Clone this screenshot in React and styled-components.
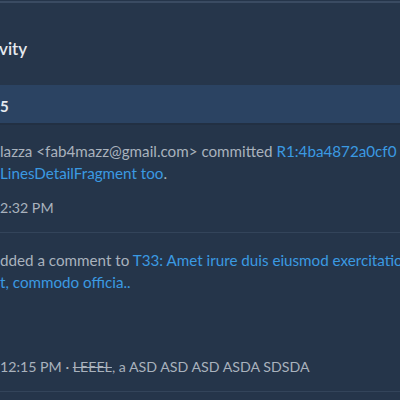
import React from 'react'
import styled, { createGlobalStyle } from 'styled-components'

const Global = createGlobalStyle`
  html, body {
    margin: 0;
    padding: 0;
    background: #25354a;
  }
  body {
    font-family: Lato, "Noto Sans", sans-serif;
    overflow: hidden;
  }
`

const Page = styled.div`
  width: 400px;
  height: 400px;
  overflow: hidden;
  background: #25354a;
  border-top: 1px solid #25354a;
`

const TopRule = styled.div`
  height: 2px;
  background: #3a4b62;
`

const Header = styled.div`
  height: 82px;
  box-sizing: border-box;
  padding-top: 35px;
  background: #26364b;
`

const Title = styled.h1`
  margin: 0 0 0 -1px;
  font-size: 17px;
  line-height: 22px;
  font-weight: 600;
  color: #e6eaef;
  white-space: nowrap;
`

const Band = styled.div`
  height: 40px;
  box-sizing: border-box;
  padding-top: 10px;
  background: #2b4362;
  border-bottom: 2px solid #223043;
  font-size: 15px;
  line-height: 22px;
  font-weight: 700;
  color: #e6eaef;
`

const Item = styled.div`
  padding: ${p => p.$top}px 0 14px;
  border-bottom: 1px solid #33445a;
`

const Line = styled.div`
  font-size: 15.2px;
  line-height: 22px;
  color: #a9b2bd;
  white-space: nowrap;
`

const Link = styled.span`
  color: #3b9ae2;
`

const Time = styled.div`
  margin-top: ${p => p.$gap}px;
  font-size: 14.2px;
  line-height: 20px;
  color: #a9b2bd;
  white-space: nowrap;
`

const Struck = styled.span`
  text-decoration: line-through;
`

export default function App() {
  return (
    <Page>
      <Global />
      <TopRule />
      <Header>
        <Title>vity</Title>
      </Header>
      <Band>5</Band>
      <Item $top={15}>
        <Line>
          lazza &lt;fab4mazz@gmail.com&gt; committed <Link>R1:4ba4872a0cf0</Link>
        </Line>
        <Line>
          <Link>LinesDetailFragment too</Link>.
        </Line>
        <Time $gap={14}>2:32 PM</Time>
      </Item>
      <Item $top={16}>
        <Line>
          dded a comment to <Link>T33: Amet irure duis eiusmod exercitatio</Link>
        </Line>
        <Line>
          <Link>t, commodo officia..</Link>
        </Line>
        <Time $gap={64}>
          12:15 PM · <Struck>LEEEL</Struck>, a ASD ASD ASD ASDA SDSDA
        </Time>
      </Item>
    </Page>
  )
}
